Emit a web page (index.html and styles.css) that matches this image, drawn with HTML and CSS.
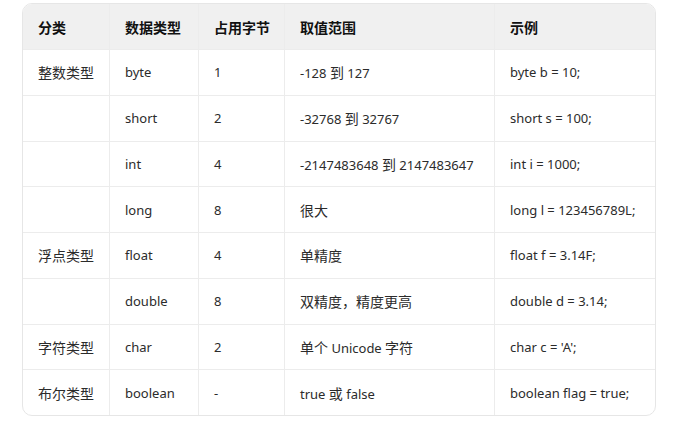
FILE: index.html
```html
<!DOCTYPE html>
<html lang="zh-CN">
<head>
<meta charset="utf-8">
<link rel="stylesheet" href="styles.css">
</head>
<body>
<div class="wrap">
<table class="types">
<colgroup>
<col class="c1"><col class="c2"><col class="c3"><col class="c4"><col class="c5">
</colgroup>
<thead>
<tr><th>分类</th><th>数据类型</th><th>占用字节</th><th>取值范围</th><th>示例</th></tr>
</thead>
<tbody>
<tr><td><span class="zh">整数类型</span></td><td>byte</td><td>1</td><td>-128 <span class="zh">到</span> 127</td><td>byte b = 10;</td></tr>
<tr><td></td><td>short</td><td>2</td><td>-32768 <span class="zh">到</span> 32767</td><td>short s = 100;</td></tr>
<tr><td></td><td>int</td><td>4</td><td>-2147483648 <span class="zh">到</span> 2147483647</td><td>int i = 1000;</td></tr>
<tr><td></td><td>long</td><td>8</td><td><span class="zh">很大</span></td><td>long l = 123456789L;</td></tr>
<tr><td><span class="zh">浮点类型</span></td><td>float</td><td>4</td><td><span class="zh">单精度</span></td><td>float f = 3.14F;</td></tr>
<tr><td></td><td>double</td><td>8</td><td><span class="zh">双精度，精度更高</span></td><td>double d = 3.14;</td></tr>
<tr><td><span class="zh">字符类型</span></td><td>char</td><td>2</td><td><span class="zh">单个</span> Unicode <span class="zh">字符</span></td><td>char c = 'A';</td></tr>
<tr><td><span class="zh">布尔类型</span></td><td>boolean</td><td>-</td><td>true <span class="zh">或</span> false</td><td>boolean flag = true;</td></tr>
</tbody>
</table>
</div>
</body>
</html>
```
FILE: styles.css
```css
html, body { margin: 0; padding: 0; background: #fff; }
body {
  font-family: "Noto Sans", "Noto Sans CJK SC", sans-serif;
  font-size: 13px;
  color: #2b2b2b;
}
.wrap { padding: 3px 0 0 22px; }
.types {
  width: 634px;
  border-collapse: separate;
  border-spacing: 0;
  border: 1px solid #e6e6e6;
  border-radius: 10px;
  overflow: hidden;
  table-layout: fixed;
}
.c1 { width: 87px; }
.c2 { width: 89px; }
.c3 { width: 86px; }
.c4 { width: 210px; }
.c5 { width: 160px; }
th, td {
  text-align: left;
  padding: 0 0 0 15px;
  border-right: 1px solid #ececec;
  border-bottom: 1px solid #ececec;
  white-space: nowrap;
}
th:last-child, td:last-child { border-right: none; }
tbody tr:last-child td { border-bottom: none; }
th {
  height: 45px;
  background: #f0f0f0;
  color: #111;
  font-size: 14px;
  font-weight: 700;
  font-family: "Noto Sans CJK SC", sans-serif;
}
td { height: 44.75px; font-weight: 400; }
.zh {
  font-family: "Noto Sans CJK SC", sans-serif;
  font-size: 14px;
}
```
